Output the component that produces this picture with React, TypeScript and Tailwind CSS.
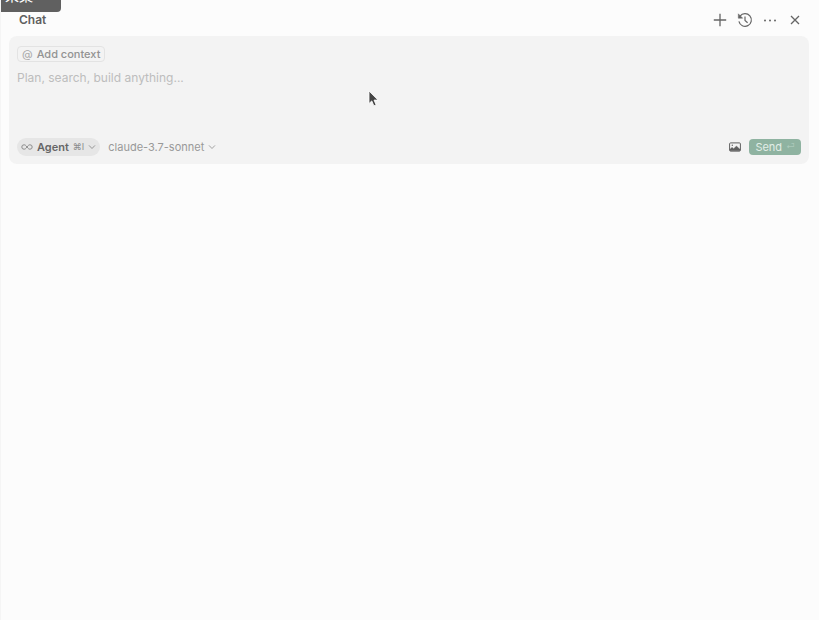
import { useState } from 'react';

function HistoryIcon() {
  return (
    <svg viewBox="0 0 16 16" className="h-4 w-4" fill="none" stroke="currentColor" strokeWidth="1.2">
      <path d="M3 4.2A6.3 6.3 0 1 1 1.9 9.4" />
      <path d="M1.3 1.8v4.4h4.4z" fill="currentColor" strokeWidth="0.5" />
      <path d="M8 4.4v4l2.6 2.4" />
    </svg>
  );
}

function Chevron() {
  return (
    <svg viewBox="0 0 8 8" className="h-2 w-2" fill="none" stroke="currentColor" strokeWidth="0.9">
      <path d="M1 2.4l3 3.1 3-3.1" />
    </svg>
  );
}

function ChatHeader() {
  return (
    <header className="flex h-9 items-center justify-between pt-1 pl-2.5 pr-1">
      <h1 className="text-xs font-semibold text-[#606060]">Chat</h1>
      <div className="flex items-center gap-[5px] text-[#656565]">
        <button type="button" aria-label="New chat" className="flex w-5 justify-center">
          <svg viewBox="0 0 16 16" className="h-4 w-4" stroke="currentColor" strokeWidth="1.3">
            <path d="M8 1.8v12.4M1.8 8h12.4" />
          </svg>
        </button>
        <button type="button" aria-label="Chat history" className="flex w-5 justify-center">
          <HistoryIcon />
        </button>
        <button type="button" aria-label="More actions" className="flex w-5 justify-center">
          <svg viewBox="0 0 16 16" className="h-4 w-4" fill="currentColor">
            <circle cx="3" cy="8.5" r="1" />
            <circle cx="8" cy="8.5" r="1" />
            <circle cx="13" cy="8.5" r="1" />
          </svg>
        </button>
        <button type="button" aria-label="Close" className="flex w-5 justify-center">
          <svg viewBox="0 0 16 16" className="h-4 w-4" stroke="currentColor" strokeWidth="1.3">
            <path d="M4 4l8 8M12 4l-8 8" />
          </svg>
        </button>
      </div>
    </header>
  );
}

function Composer() {
  const [prompt, setPrompt] = useState('');

  return (
    <form
      onSubmit={(e) => e.preventDefault()}
      className="rounded-lg bg-[#f3f3f3] px-2 pt-2.5 pb-2"
    >
      <button
        type="button"
        className="flex h-4 items-center gap-1 rounded border border-[#e3e3e3] px-1 text-[11px] font-medium text-[#929292]"
      >
        <span className="font-normal text-[#a8a8a8]">@</span>
        Add context
      </button>

      <textarea
        aria-label="Message"
        value={prompt}
        onChange={(e) => setPrompt(e.target.value)}
        placeholder="Plan, search, build anything..."
        className="mt-2 block h-16 w-full resize-none bg-transparent text-xs text-[#606060] outline-none placeholder:text-[#bdbdbd]"
      />

      <div className="mt-1 flex items-center justify-between">
        <div className="flex items-center gap-2">
          <button
            type="button"
            className="flex h-[18px] items-center gap-1 rounded-full bg-[#e6e6e6] px-1 text-[11px] text-[#8c8c8c]"
          >
            <svg viewBox="0 0 12 8" className="h-2 w-3" fill="none" stroke="currentColor" strokeWidth="1">
              <path d="M6 4C4.8 2.4 4.2 1.8 3 1.8a2.2 2.2 0 0 0 0 4.4C4.2 6.2 4.8 5.6 6 4s1.8-2.2 3-2.2a2.2 2.2 0 0 1 0 4.4C7.8 6.2 7.2 5.6 6 4z" />
            </svg>
            <span className="font-semibold text-[#666666]">Agent</span>
            <span className="text-[9px]">⌘I</span>
            <Chevron />
          </button>
          <button type="button" className="flex items-center gap-1 text-[11px] leading-4 text-[#999999]">
            claude-3.7-sonnet
            <Chevron />
          </button>
        </div>

        <div className="flex items-center gap-2">
          <button type="button" aria-label="Attach image" className="text-[#606060]">
            <svg viewBox="0 0 12 10" className="h-3 w-3" fill="none" stroke="currentColor" strokeWidth="1">
              <rect x="0.6" y="0.9" width="10.8" height="8.2" rx="1" />
              <path d="M1 8.8V7.2l2-2 1.6 1.5 2.8-2.8 3.6 3.4v1.5z" fill="currentColor" strokeWidth="0.3" />
              <circle cx="3.3" cy="3.2" r="0.7" fill="currentColor" stroke="none" />
            </svg>
          </button>
          <button
            type="submit"
            className="flex h-4 items-center gap-1 rounded bg-[#8fb3a1] px-1.5 text-[11px] text-[#e2eee7]"
          >
            Send
            <span className="text-[9px] text-[#abc9ba]">⏎</span>
          </button>
        </div>
      </div>
    </form>
  );
}

export default function App() {
  return (
    <div className="relative min-h-screen overflow-hidden border-x border-l-[#f5f5f5] border-r-white bg-[#fcfcfc] pr-2.5 pl-2 font-['Inter','Noto_Sans_CJK_SC',sans-serif]">
      <ChatHeader />
      <main>
        <Composer />
      </main>

      {/* tooltip hanging in from the toolbar above */}
      <div
        role="tooltip"
        className="absolute -left-6 -top-3 flex h-6 items-start rounded bg-[#606060] px-7 text-sm leading-4 text-white"
      >
        采集
      </div>

      <svg viewBox="0 0 12 18" className="absolute left-[367px] top-[90px] h-[18px] w-3">
        <path
          d="M1 1v12.5l2.8-2.6 2.1 4.9 2.2-.9-2.1-4.8H10z"
          fill="#444444"
          stroke="#ffffff"
          strokeWidth="0.8"
        />
      </svg>
    </div>
  );
}
